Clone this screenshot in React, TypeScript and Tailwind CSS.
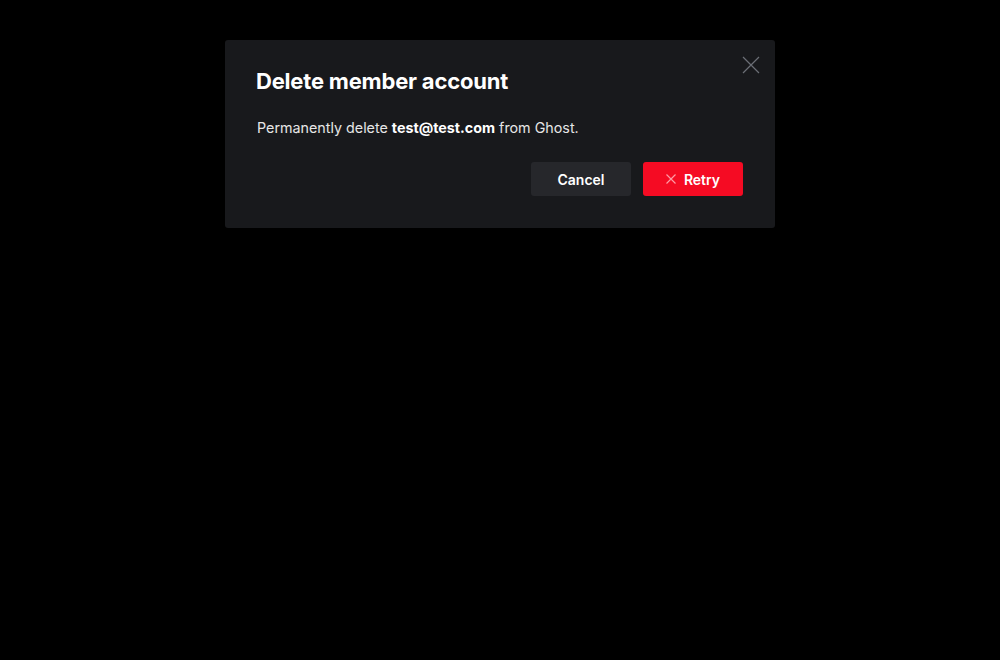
export default function App() {
  return (
    <div className="min-h-[660px] w-full bg-black" style={{ fontFamily: 'Inter, "Noto Sans", sans-serif' }}>
      <div className="flex justify-center pt-10">
        <div className="relative w-[550px] rounded-[3px] bg-[#18191c] px-8 pb-8 pt-[26px]">
          <button className="absolute right-[15px] top-4 flex h-[18px] w-[18px] items-center justify-center text-[#6b6f76]">
            <svg width="18" height="18" viewBox="0 0 18 18" fill="none" stroke="currentColor" strokeWidth="1.2">
              <path d="M1 1l16 16M17 1L1 17" />
            </svg>
          </button>
          <h2 className="-ml-px text-[22px] font-bold leading-[30px] tracking-[-0.009em] text-white">Delete member account</h2>
          <p className="mt-[22px] text-[14.3px] leading-5 text-[#e6e6e6]">
            Permanently delete <span className="font-bold text-white">test@test.com</span> from Ghost.
          </p>
          <div className="mt-6 flex justify-end gap-3">
            <button className="h-[34px] w-[100px] rounded-[3px] bg-[#26272b] text-[14px] font-semibold text-white">Cancel</button>
            <button className="flex h-[34px] w-[100px] items-center justify-center gap-2 rounded-[3px] bg-[#f50b23] text-[14px] font-semibold text-white">
              <svg width="10" height="10" viewBox="0 0 10 10" fill="none" stroke="#ff9aa5" strokeWidth="1.2">
                <path d="M0.5 0.5l9 9M9.5 0.5l-9 9" />
              </svg>
              Retry
            </button>
          </div>
        </div>
      </div>
    </div>
  );
}
